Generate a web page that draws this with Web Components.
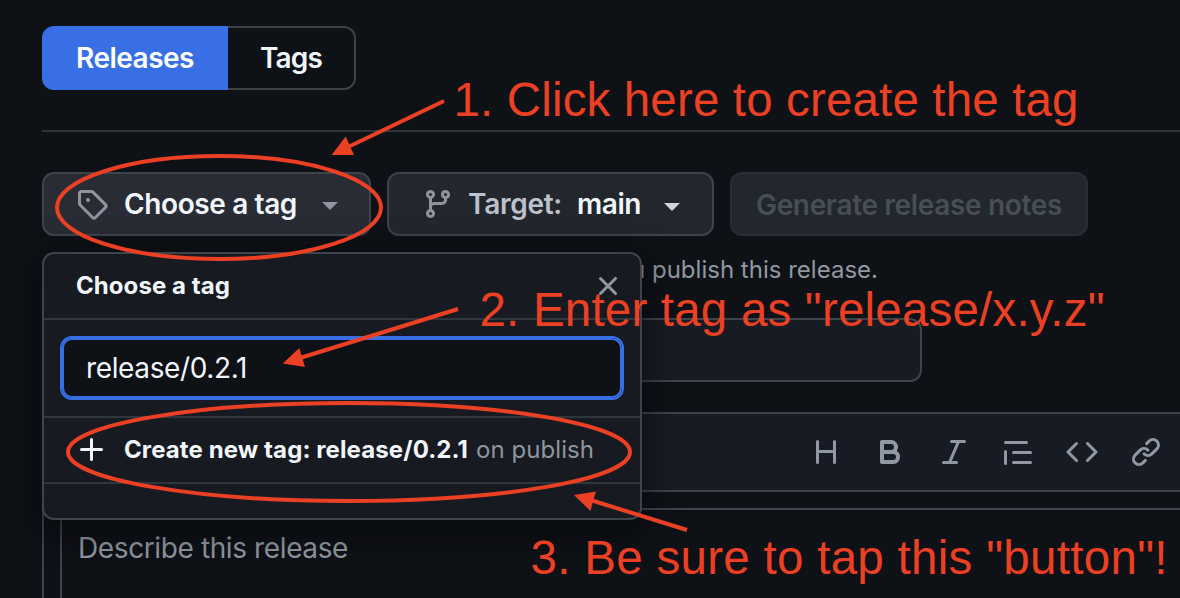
<!DOCTYPE html>
<html lang="en">
<head>
<meta charset="utf-8">
<title>New release</title>
<style>
  html, body { margin: 0; height: 598px; overflow: hidden; background: #0e1116; }
  body { font-family: Inter, "Liberation Sans", sans-serif; color: #f0f6fc; }
</style>
</head>
<body>
<release-page></release-page>
<script>
const ICONS = {
  tag: 'M1 7.775V2.75C1 1.784 1.784 1 2.75 1h5.025c.464 0 .91.184 1.238.513l6.25 6.25a1.75 1.75 0 0 1 0 2.474l-5.026 5.026a1.75 1.75 0 0 1-2.474 0l-6.25-6.25A1.752 1.752 0 0 1 1 7.775Zm1.5 0c0 .066.026.13.073.177l6.25 6.25a.25.25 0 0 0 .354 0l5.025-5.025a.25.25 0 0 0 0-.354l-6.25-6.25a.25.25 0 0 0-.177-.073H2.75a.25.25 0 0 0-.25.25ZM6 5a1 1 0 1 1 0 2 1 1 0 0 1 0-2Z',
  branch: 'M9.5 3.25a2.25 2.25 0 1 1 3 2.122V6A2.5 2.5 0 0 1 10 8.5H6a1 1 0 0 0-1 1v1.128a2.251 2.251 0 1 1-1.5 0V5.372a2.25 2.25 0 1 1 1.5 0v1.836A2.493 2.493 0 0 1 6 7h4a1 1 0 0 0 1-1v-.628A2.25 2.25 0 0 1 9.5 3.25Zm-6 0a.75.75 0 1 0 1.5 0 .75.75 0 0 0-1.5 0Zm8.25-.75a.75.75 0 1 0 0 1.5.75.75 0 0 0 0-1.5ZM4.25 12a.75.75 0 1 0 0 1.5.75.75 0 0 0 0-1.5Z',
  x: 'M3.72 3.72a.75.75 0 0 1 1.06 0L8 6.94l3.22-3.22a.75.75 0 1 1 1.06 1.06L9.06 8l3.22 3.22a.75.75 0 1 1-1.06 1.06L8 9.06l-3.22 3.22a.75.75 0 0 1-1.06-1.06L6.94 8 3.72 4.78a.75.75 0 0 1 0-1.06Z',
  plus: 'M7.75 2a.75.75 0 0 1 .75.75V7h4.25a.75.75 0 0 1 0 1.5H8.5v4.25a.75.75 0 0 1-1.5 0V8.5H2.75a.75.75 0 0 1 0-1.5H7V2.75A.75.75 0 0 1 7.75 2Z',
  heading: 'M3.75 2a.75.75 0 0 1 .75.75V7h7V2.75a.75.75 0 0 1 1.5 0v10.5a.75.75 0 0 1-1.5 0V8.5h-7v4.75a.75.75 0 0 1-1.5 0V2.75A.75.75 0 0 1 3.75 2Z',
  bold: 'M4 2h4.5a3.501 3.501 0 0 1 2.852 5.53A3.499 3.499 0 0 1 9.5 14H4a1 1 0 0 1-1-1V3a1 1 0 0 1 1-1Zm1 7v3h4.5a1.5 1.5 0 0 0 0-3Zm3.5-2a1.5 1.5 0 0 0 0-3H5v3Z',
  italic: 'M6 2.75A.75.75 0 0 1 6.75 2h6.5a.75.75 0 0 1 0 1.5h-2.505l-3.858 9H9.25a.75.75 0 0 1 0 1.5h-6.5a.75.75 0 0 1 0-1.5h2.505l3.858-9H6.75A.75.75 0 0 1 6 2.75Z',
  quote: 'M1.75 2.5h10.5a.75.75 0 0 1 0 1.5H1.75a.75.75 0 0 1 0-1.5Zm4 5h8.5a.75.75 0 0 1 0 1.5h-8.5a.75.75 0 0 1 0-1.5Zm0 5h8.5a.75.75 0 0 1 0 1.5h-8.5a.75.75 0 0 1 0-1.5ZM2.5 7.75v6a.75.75 0 0 1-1.5 0v-6a.75.75 0 0 1 1.5 0Z',
  code: 'm11.28 3.22 4.25 4.25a.75.75 0 0 1 0 1.06l-4.25 4.25a.749.749 0 0 1-1.275-.326.749.749 0 0 1 .215-.734L13.94 8l-3.72-3.72a.749.749 0 0 1 .326-1.275.749.749 0 0 1 .734.215Zm-6.56 0a.751.751 0 0 1 1.042.018.751.751 0 0 1 .018 1.042L2.06 8l3.72 3.72a.749.749 0 0 1-.326 1.275.749.749 0 0 1-.734-.215L.47 8.53a.75.75 0 0 1 0-1.06Z',
  link: 'm7.775 3.275 1.25-1.25a3.5 3.5 0 1 1 4.95 4.95l-2.5 2.5a3.5 3.5 0 0 1-4.95 0 .751.751 0 0 1 .018-1.042.751.751 0 0 1 1.042-.018 1.998 1.998 0 0 0 2.83 0l2.5-2.5a2.002 2.002 0 0 0-2.83-2.83l-1.25 1.25a.751.751 0 0 1-1.042-.018.751.751 0 0 1-.018-1.042Zm-4.69 9.64a1.998 1.998 0 0 0 2.83 0l1.25-1.25a.751.751 0 0 1 1.042.018.751.751 0 0 1 .018 1.042l-1.25 1.25a3.5 3.5 0 1 1-4.95-4.95l2.5-2.5a3.5 3.5 0 0 1 4.95 0 .751.751 0 0 1-.018 1.042.751.751 0 0 1-1.042.018 1.998 1.998 0 0 0-2.83 0l-2.5 2.5a1.998 1.998 0 0 0 0 2.83Z'
};

class BaseElement extends HTMLElement {
  connectedCallback() {
    if (this.shadowRoot) return;
    this.attachShadow({ mode: 'open' }).innerHTML = this.render();
    this.ready();
  }
  ready() {}
}

class UiIcon extends BaseElement {
  render() {
    return `<style>:host{display:block;flex:none;width:32px;height:32px}svg{display:block}</style>
      <svg width="32" height="32" viewBox="0 0 16 16" fill="currentColor"><path fill-rule="evenodd" d="${ICONS[this.getAttribute('name')]}"/></svg>`;
  }
}

class UiCaret extends BaseElement {
  render() {
    return `<style>:host{display:block;flex:none;border:8px solid transparent;border-top-color:currentColor;border-bottom:0}</style>`;
  }
}

/* A single line of text, tracked so that it fills the width in its w attribute. */
class FitText extends BaseElement {
  render() {
    return `<style>:host{display:block;flex:none;white-space:pre;line-height:1.2}span{display:inline-block}</style><span><slot></slot></span>`;
  }
  ready() {
    const w = Number(this.getAttribute('w'));
    const span = this.shadowRoot.querySelector('span');
    this.style.width = w + 'px';
    const natural = span.getBoundingClientRect().width;
    span.style.letterSpacing = (w - natural) / this.textContent.length + 'px';
  }
}

class TabSwitch extends BaseElement {
  render() {
    return `<style>
      :host{display:flex;height:64px;width:314px;font-size:28px;font-weight:600}
      div{box-sizing:border-box;display:flex;align-items:center;padding-top:2px}
      .on{width:186px;padding-left:34px;background:#386fe5;color:#fff;border-radius:12px 0 0 12px}
      .off{width:128px;padding-left:32px;border:2px solid #3d4249;border-left:0;border-radius:0 12px 12px 0}
    </style><div class="on"><fit-text w="118">Releases</fit-text></div><div class="off"><fit-text w="62">Tags</fit-text></div>`;
  }
}

class UiButton extends BaseElement {
  render() {
    return `<style>
      :host{box-sizing:border-box;display:flex;align-items:center;height:64px;border:2px solid #3d444c;border-radius:12px;background:#22272e;font-size:28px;font-weight:600}
      :host([active]){background:#292c34}
      :host([disabled]){border-color:#282e35;color:#484e56}
      ::slotted(fit-text){padding-top:2px}
    </style><slot></slot>`;
  }
}

class TagPopup extends BaseElement {
  render() {
    return `<style>
      :host{box-sizing:border-box;display:flex;flex-direction:column;width:600px;height:268px;border:2px solid #3d444c;border-radius:12px;background:#171b21;box-shadow:0 8px 36px rgba(1,4,9,.65);font-size:24px;font-weight:700}
      .head,.field,.row{box-sizing:border-box;display:flex;border-bottom:2px solid #30363d}
      .head{height:66px;padding:0 16px 0 32px;align-items:center;justify-content:space-between;color:#f0f6fc}
      .head ui-icon{color:#9198a1}
      .field{height:98px;padding:16px}
      .input{box-sizing:border-box;flex:1;display:flex;align-items:center;padding:2px 0 0 24px;border:2px solid #386fe5;border-radius:12px;box-shadow:inset 0 0 0 2px #386fe5;background:#0e1116;font-size:28px;font-weight:400}
      .row{height:66px;padding-left:32px;align-items:center}
      .row .name{margin-left:16px}
      .row .when{margin-left:8px;color:#8f959e;font-weight:400}
    </style>
    <div class="head"><fit-text w="154">Choose a tag</fit-text><ui-icon name="x"></ui-icon></div>
    <div class="field"><div class="input"><fit-text w="161">release/0.2.1</fit-text></div></div>
    <div class="row"><ui-icon name="plus"></ui-icon><fit-text class="name" w="344">Create new tag: release/0.2.1</fit-text><fit-text class="when" w="118">on publish</fit-text></div>`;
  }
}

class NotesEditor extends BaseElement {
  render() {
    return `<style>
      :host{box-sizing:border-box;display:block;width:1200px;height:240px;border:2px solid #3d444c;border-radius:12px}
      .bar{box-sizing:border-box;height:78px;display:flex;align-items:center;gap:32px;padding-left:766px;background:#171b23;border-bottom:2px solid #3d444c;border-radius:10px 10px 0 0;color:#9198a1}
      .area{box-sizing:border-box;margin:16px 16px 0;height:130px;border:2px solid #3d444c;border-radius:12px;padding:22px 0 0 16px;font-size:28px;color:#9097a0}
    </style>
    <div class="bar">${['heading', 'bold', 'italic', 'quote', 'code', 'link'].map(n => `<ui-icon name="${n}"></ui-icon>`).join('')}</div>
    <div class="area"><fit-text w="270">Describe this release</fit-text></div>`;
  }
}

class HintOverlay extends BaseElement {
  render() {
    return `<style>:host{display:block;pointer-events:none}svg{display:block}text{font:47.5px "Liberation Sans",Arial,sans-serif}</style>
    <svg width="1180" height="598" viewBox="0 0 1180 598" fill="#eb4024">
      <g fill="none" stroke="#eb4024" stroke-width="4">
        <ellipse cx="219" cy="207.5" rx="162" ry="51.5"/>
        <ellipse cx="349" cy="452" rx="281" ry="49"/>
        <path d="M444 101 348 147M458 309 300 358M687 530 592 500.5"/>
      </g>
      <path d="M331.500 155 345.700 136.500 350 146 354 155ZM282.700 363.500 299.300 348 302 357 305 367ZM574 495 596 491.500 593 501 590.500 511Z"/>
      <text x="453.500" y="116" textLength="625">1. Click here to create the tag</text>
      <text x="479.500" y="326" textLength="625">2. Enter tag as "release/x.y.z"</text>
      <text x="530.500" y="574" textLength="637">3. Be sure to tap this "button"!</text>
    </svg>`;
  }
}

class ReleasePage extends BaseElement {
  render() {
    return `<style>
      :host{position:relative;box-sizing:border-box;display:block;width:1180px;height:598px;overflow:hidden;padding:26px 0 0 42px}
      .rule{margin-top:40px;height:2px;background:#30353b}
      .buttons{display:flex;gap:16px;margin-top:40px}
      .tag{width:329px;padding-left:32px}
      .tag fit-text{margin-left:16px}.tag ui-caret{margin-left:25px;margin-top:3px}
      .target{width:327px;padding-left:33px}
      .target .k{margin-left:14px;color:#bcc1cb}.target .v{margin-left:15px}.target ui-caret{margin-left:23px;margin-top:5px}
      .target ui-caret{color:#d0d4dc}
      .gen{width:358px;padding-left:24px;padding-top:1px}
      .icon{color:#8f949e}
      .note{height:82px;padding:20px 0 0 589px;box-sizing:border-box;font-size:24px;color:#9198a1}
      .title{box-sizing:border-box;width:880px;height:64px;border:2px solid #3d444c;border-radius:12px;background:#171b23}
      notes-editor{margin-top:30px}
      tag-popup{position:absolute;left:42px;top:252px}
      hint-overlay{position:absolute;left:0;top:0}
    </style>
    <tab-switch></tab-switch>
    <div class="rule"></div>
    <div class="buttons">
      <ui-button class="tag" active><ui-icon class="icon" name="tag"></ui-icon><fit-text w="173">Choose a tag</fit-text><ui-caret class="icon"></ui-caret></ui-button>
      <ui-button class="target"><ui-icon class="icon" name="branch"></ui-icon><fit-text class="k" w="94">Target:</fit-text><fit-text class="v" w="64">main</fit-text><ui-caret></ui-caret></ui-button>
      <ui-button class="gen" disabled><fit-text w="306">Generate release notes</fit-text></ui-button>
    </div>
    <div class="note"><fit-text w="247">u publish this release.</fit-text></div>
    <div class="title"></div>
    <notes-editor></notes-editor>
    <tag-popup></tag-popup>
    <hint-overlay></hint-overlay>`;
  }
}

customElements.define('ui-icon', UiIcon);
customElements.define('ui-caret', UiCaret);
customElements.define('fit-text', FitText);
customElements.define('tab-switch', TabSwitch);
customElements.define('ui-button', UiButton);
customElements.define('tag-popup', TagPopup);
customElements.define('notes-editor', NotesEditor);
customElements.define('hint-overlay', HintOverlay);
customElements.define('release-page', ReleasePage);
</script>
</body>
</html>
